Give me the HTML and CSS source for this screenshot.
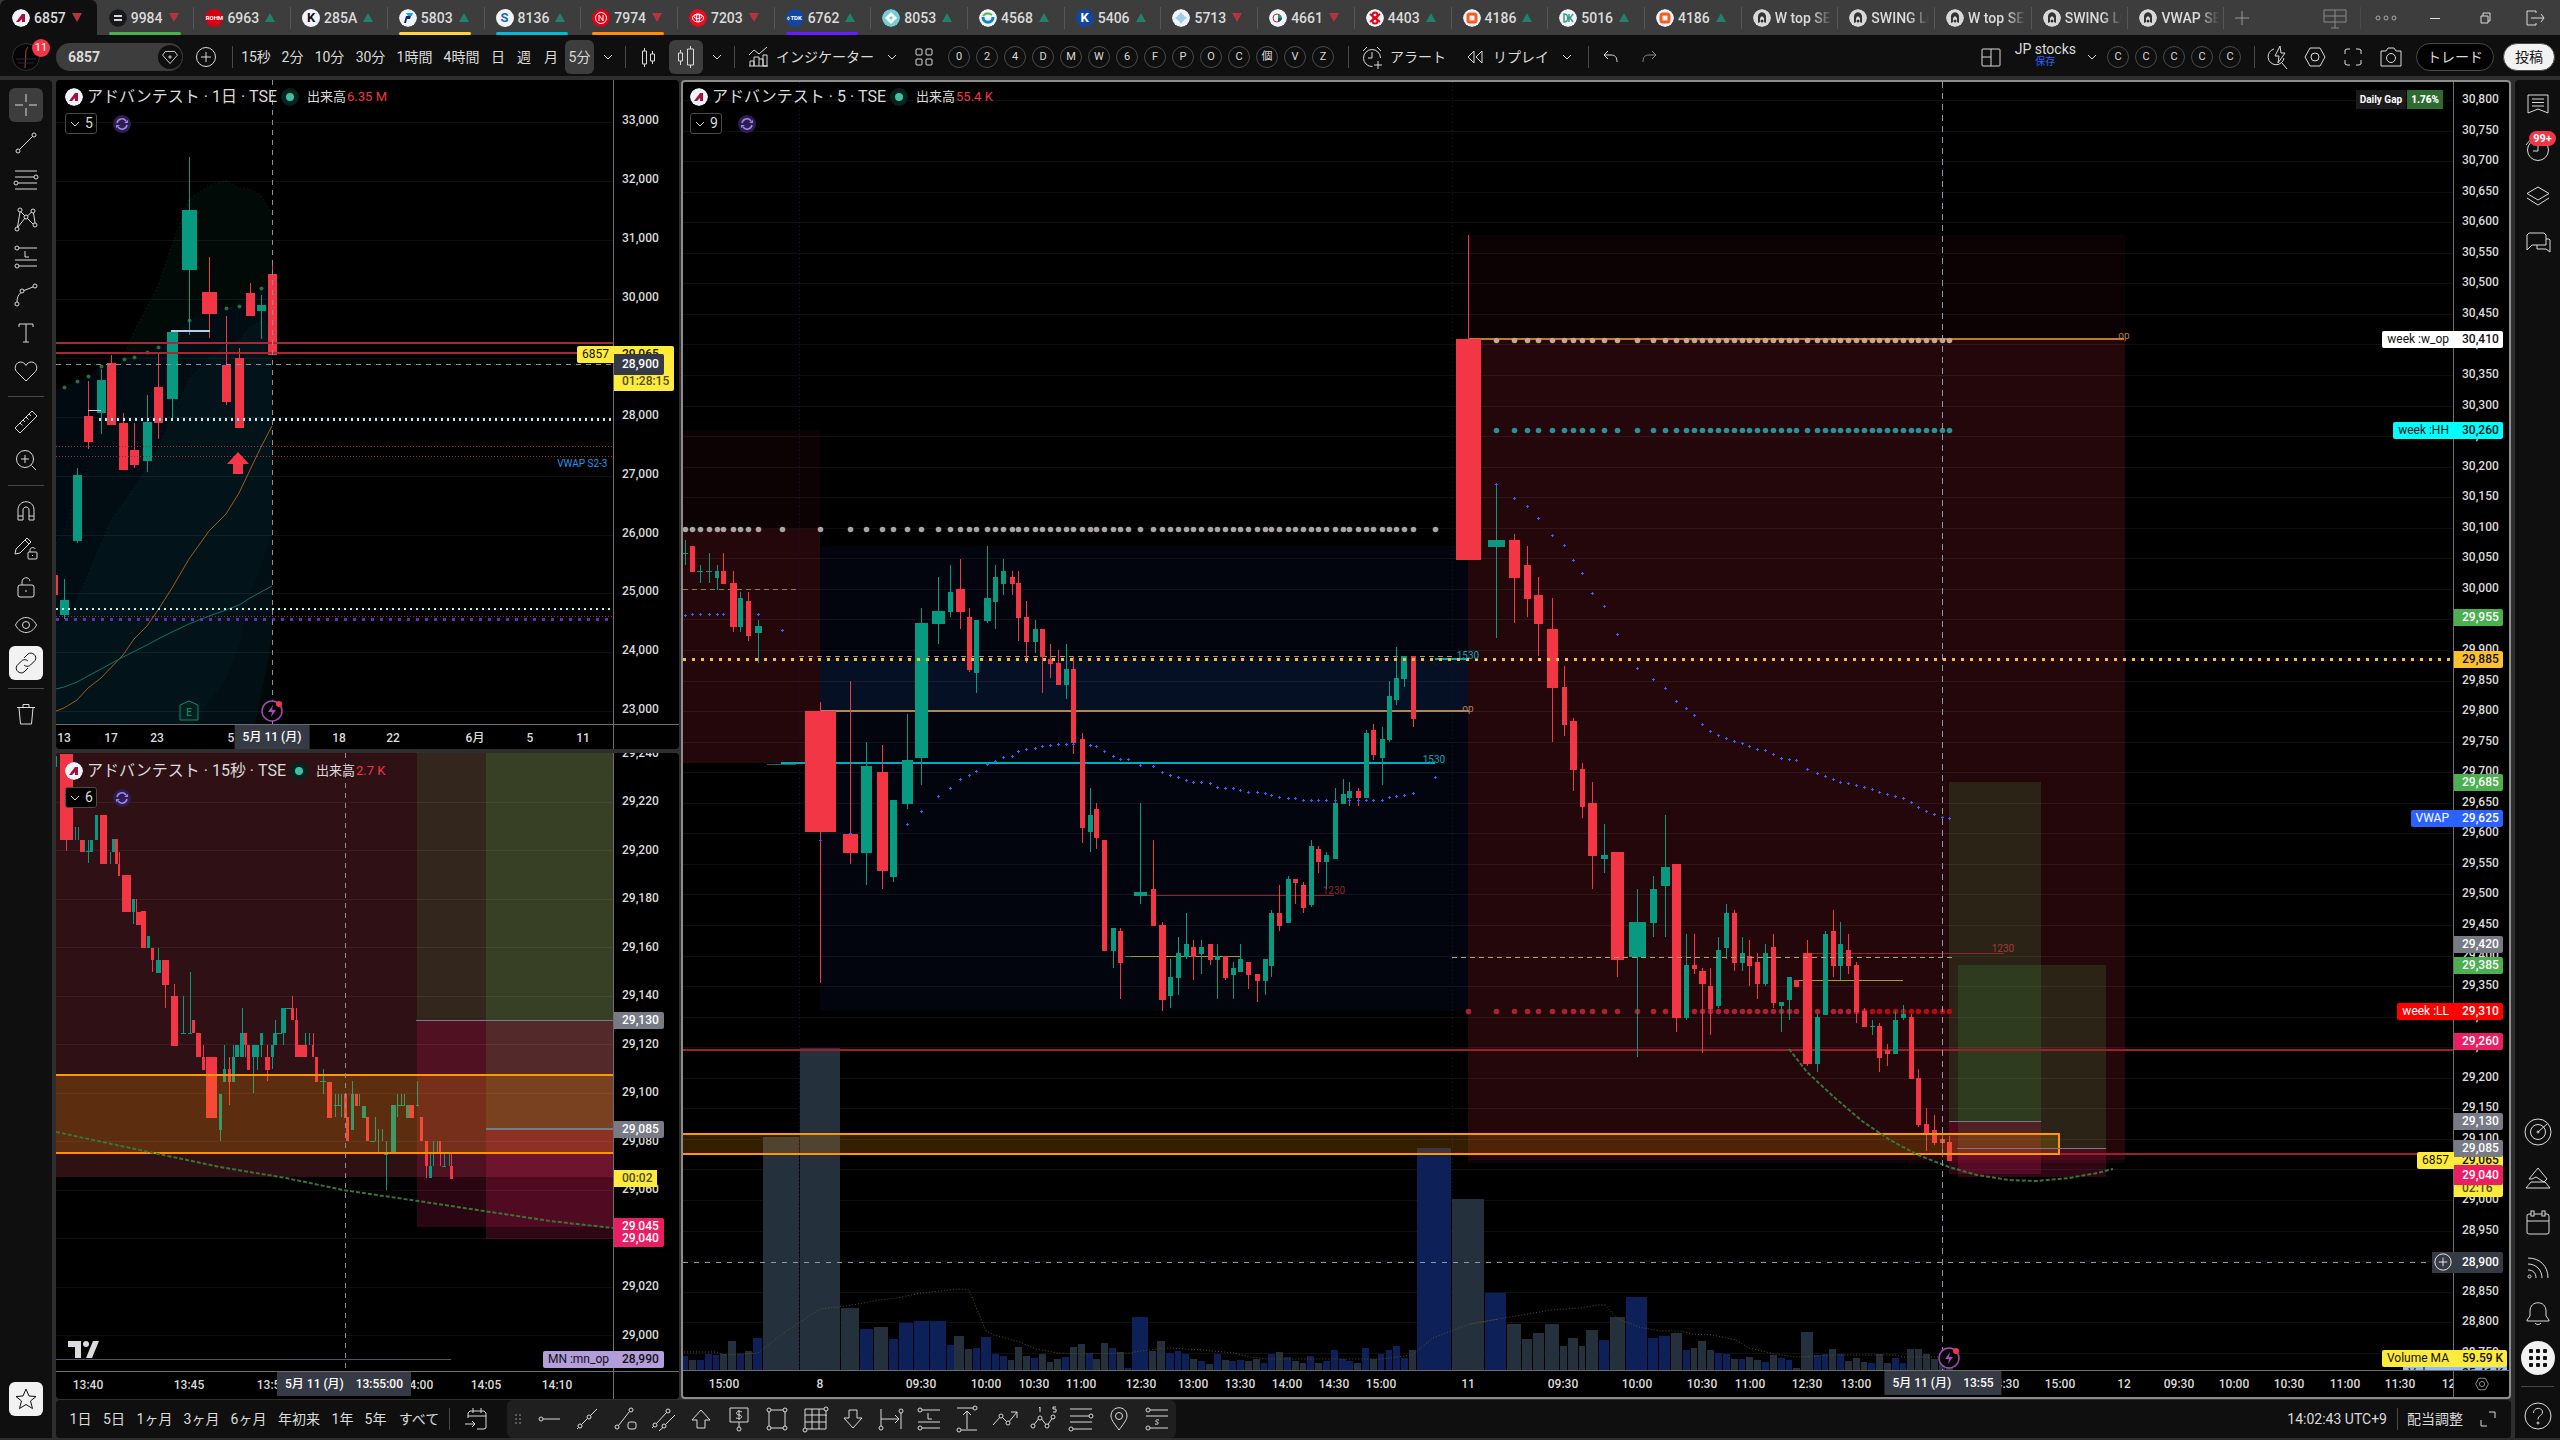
FILE: index.html
```html
<!DOCTYPE html>
<html lang="ja">
<head>
<meta charset="utf-8">
<title>6857 アドバンテスト</title>
<link rel="stylesheet" href="styles.css">
</head>
<body>
<svg class="sprite" aria-hidden="true">
  <symbol id="i-cross" viewBox="0 0 28 28"><path d="M14 3v8M14 17v8M3 14h8M17 14h8"/></symbol>
  <symbol id="i-trend" viewBox="0 0 28 28"><circle cx="6" cy="22" r="2"/><circle cx="22" cy="6" r="2"/><path d="M7.500 20.500l13-13"/></symbol>
  <symbol id="i-fib" viewBox="0 0 28 28"><path d="M3 4h22M3 10h19M6 16h19M3 22h22"/><circle cx="24" cy="10" r="2"/><circle cx="4" cy="16" r="2"/></symbol>
  <symbol id="i-pattern" viewBox="0 0 28 28"><circle cx="5" cy="24" r="2"/><circle cx="8" cy="5" r="2"/><circle cx="14" cy="12" r="2"/><circle cx="21" cy="6" r="2"/><circle cx="23" cy="20" r="2"/><path d="M5.500 22L8 7M9 7l4 4M15.500 11l4-4M21.500 8l1.500 10M21 19l-6-6M13 13l-7 9"/></symbol>
  <symbol id="i-long" viewBox="0 0 28 28"><circle cx="5" cy="5" r="2"/><circle cx="5" cy="23" r="2"/><path d="M7 5h18M7 23h18M3 17h22M13 8v6h4"/></symbol>
  <symbol id="i-path" viewBox="0 0 28 28"><circle cx="5" cy="23" r="2"/><circle cx="10" cy="10" r="2"/><circle cx="23" cy="5" r="2"/><path d="M5 21c0-4 1-7 4-9.500M12 9.500l9-3.500"/></symbol>
  <symbol id="i-text" viewBox="0 0 28 28"><path d="M7 8V5h14v3M14 5v18M11 23h6"/></symbol>
  <symbol id="i-heart" viewBox="0 0 28 28"><path d="M14 24L4.500 14.500C1.500 11 4 5 8.500 5 11 5 13 6.500 14 8.500 15 6.500 17 5 19.500 5c4.500 0 7 6 4 9.500z"/></symbol>
  <symbol id="i-ruler" viewBox="0 0 28 28"><path d="M3 20L20 3l5 5L8 25zM8 15l2.500 2.500M11 12l2 2M14 9l2.500 2.500M17 6l2 2"/></symbol>
  <symbol id="i-zoomin" viewBox="0 0 28 28"><circle cx="13" cy="13" r="8.500"/><path d="M19.500 19.500L24 24M13 9v8M9 13h8"/></symbol>
  <symbol id="i-magnet" viewBox="0 0 28 28"><path d="M6 23V13c0-11 16-11 16 0v10h-5V13c0-4-6-4-6 0v10zM6 19h5M17 19h5"/></symbol>
  <symbol id="i-drawlock" viewBox="0 0 28 28"><path d="M3 19l1-5L15 3l4 4L8 18zM13 5l4 4"/><rect x="16" y="17" width="9" height="7" rx="1"/><path d="M18 17v-2c0-3 5-3 5-1M20.500 20v1"/></symbol>
  <symbol id="i-lock" viewBox="0 0 28 28"><rect x="6" y="12" width="16" height="12" rx="2"/><path d="M10 12V9c0-5 7-6 8-1M14 17v2"/></symbol>
  <symbol id="i-eye" viewBox="0 0 28 28"><path d="M3.500 14c5-10 16-10 21 0-5 10-16 10-21 0z"/><circle cx="14" cy="14" r="3.500"/></symbol>
  <symbol id="i-link" viewBox="0 0 28 28"><path d="M12 9l4-4c4-3 10 2 7 6.500l-4.500 4.500c-2 2-5 1.500-6.500 0M16 19l-4 4c-4 3-10-2-7-6.500L9.500 12c2-2 5-1.500 6.500 0"/></symbol>
  <symbol id="i-trash" viewBox="0 0 28 28"><path d="M5 7.500h18M11 7V4.500h6V7M7 8l1.500 16h11L21 8"/></symbol>
  <symbol id="i-star" viewBox="0 0 28 28"><path d="M14 4l3 7 7 .5-5.500 4.500 2 7.500L14 19.500 7.500 23.500l2-7.500L4 11.500l7-.5z"/></symbol>
  <symbol id="i-down" viewBox="0 0 28 28"><path d="M10 12l4 4 4-4"/></symbol>
  <symbol id="i-down-s" viewBox="0 0 16 16"><path d="M4 6l4 4 4-4"/></symbol>
  <symbol id="i-sync" viewBox="0 0 18 18"><circle cx="9" cy="9" r="9" fill="#2c1f4d" stroke="none"/><path d="M4 8a5 5 0 0 1 9-2M14 10a5 5 0 0 1-9 2" stroke="#a583f0" stroke-width="1.500"/><path d="M15 5v3h-4zM3 13v-3h4z" fill="#a583f0" stroke="none"/></symbol>
  <symbol id="i-pluscircle" viewBox="0 0 28 28"><circle cx="14" cy="14" r="9.500"/><path d="M14 9v10M9 14h10"/></symbol>
  <symbol id="i-bars" viewBox="0 0 28 28"><path d="M8.500 8h4v13h-4zM10.500 5v3M10.500 21v3M16.500 11h4v7h-4zM18.500 8v3M18.500 18v3"/></symbol>
  <symbol id="i-candle" viewBox="0 0 28 28"><path d="M6.500 10h4v8h-4zM8.500 7v3M8.500 18v4M15.500 6h6v16h-6zM18.500 3v3M18.500 22v3"/></symbol>
  <symbol id="i-indicator" viewBox="0 0 28 28"><path d="M5 12l5-5 5 4 8-7M6 23v-5h4v5M10 23v-9h5v9M15 16h4v7M19 23V12h4v11zM5 23h19"/></symbol>
  <symbol id="i-grid4" viewBox="0 0 28 28"><rect x="6" y="6" width="6" height="6" rx="1"/><rect x="16" y="6" width="6" height="6" rx="1"/><rect x="6" y="16" width="6" height="6" rx="1"/><rect x="16" y="16" width="6" height="6" rx="1"/></symbol>
  <symbol id="i-alert" viewBox="0 0 28 28"><path d="M22.500 15a8.500 8.500 0 1 0-8 8.500M14 9v6h-4M5 8l4-4M19 4l4 4M20 18v8M16 22h8"/></symbol>
  <symbol id="i-rewind" viewBox="0 0 28 28"><path d="M13 8v12l-6-6zM21 8v12l-6-6z"/></symbol>
  <symbol id="i-undo" viewBox="0 0 28 28"><path d="M11 8l-4 4 4 4M7 12h7c4 0 6 2 6 7"/></symbol>
  <symbol id="i-redo" viewBox="0 0 28 28"><path d="M17 8l4 4-4 4M21 12h-7c-4 0-6 2-6 7"/></symbol>
  <symbol id="i-layout" viewBox="0 0 28 28"><rect x="5" y="6" width="18" height="17" rx="1"/><path d="M14 6v17M5 14h9"/></symbol>
  <symbol id="i-quick" viewBox="0 0 28 28"><path d="M11 6a8 8 0 1 0 10 9M19 20l5 6M17 3l-5 10h4l-1 7 7-10h-4z"/></symbol>
  <symbol id="i-hex" viewBox="0 0 28 28"><path d="M9 5h10l5 9-5 9H9l-5-9z"/><circle cx="14" cy="14" r="4"/></symbol>
  <symbol id="i-full" viewBox="0 0 28 28"><path d="M6 11V7l2-1h3M17 6h3l2 1v4M22 17v4l-2 1h-3M11 22H8l-2-1v-4"/></symbol>
  <symbol id="i-camera" viewBox="0 0 28 28"><path d="M4 8h5l2-3h6l2 3h5v15H4z"/><circle cx="14" cy="15" r="4.500"/></symbol>
  <symbol id="i-list" viewBox="0 0 28 28"><path d="M4 5h20v18l-10-4-10 4zM8 9h12M8 12.500h12M8 16h12"/></symbol>
  <symbol id="i-clock" viewBox="0 0 28 28"><circle cx="14" cy="14" r="10.500"/><path d="M14 7v8H9M2 9l5-6M26 9l-5-6"/></symbol>
  <symbol id="i-layers" viewBox="0 0 28 28"><path d="M14 5l11 6.500L14 18 3 11.500zM3 16l11 7 11-7"/></symbol>
  <symbol id="i-chat" viewBox="0 0 28 28"><path d="M3 22V7l2-2h15l2 2v10H8zM22 11h3l1 1v12l-4-3h-9v-4"/></symbol>
  <symbol id="i-radar" viewBox="0 0 28 28"><circle cx="14" cy="14" r="13"/><circle cx="14" cy="14" r="7.500"/><path d="M14 14l9-8"/><circle cx="14" cy="14" r="1"/></symbol>
  <symbol id="i-peak" viewBox="0 0 28 28"><path d="M2 24h24l-5-6H7zM5 15l9-11 9 11-3 3-8-5-4 2z"/></symbol>
  <symbol id="i-cal" viewBox="0 0 28 28"><rect x="3" y="5" width="22" height="20" rx="2"/><path d="M3 12h22"/><rect class="mask" x="7" y="2" width="3" height="5"/><rect class="mask" x="18" y="2" width="3" height="5"/></symbol>
  <symbol id="i-rss" viewBox="0 0 28 28"><circle cx="5.500" cy="22.500" r="1.500"/><path d="M4 16c5 0 8 3 8 8M4 10c8 0 14 6 14 14M4 4c12 0 20 8 20 20"/></symbol>
  <symbol id="i-bell" viewBox="0 0 28 28"><path d="M3 22v-1l3-4v-5c0-11 16-11 16 0v5l3 4v1zM11 24c1 2 5 2 6 0"/></symbol>
  <symbol id="i-help" viewBox="0 0 28 28"><circle cx="14" cy="14" r="13"/><path d="M9.500 11c0-6 9-6 9-1 0 4-4.500 3-4.500 7.500"/><circle cx="14" cy="21" r="1"/></symbol>
  <symbol id="i-goto" viewBox="0 0 28 28"><path d="M6 13V8l2-2h14l2 2v15l-2 1h-7M6 11h18M11 3v5M19 3v5M3 19h10M10 16l3 3-3 3"/></symbol>
  <symbol id="i-hray" viewBox="0 0 28 28"><circle cx="6" cy="14" r="2"/><path d="M8 14h17"/></symbol>
  <symbol id="i-line" viewBox="0 0 28 28"><circle cx="7" cy="21" r="2"/><circle cx="16" cy="12" r="2"/><path d="M4 24l1.500-1.500M8.500 19.500l6-6M17.500 10.500L24 4"/></symbol>
  <symbol id="i-rotate" viewBox="0 0 28 28"><circle cx="6" cy="22" r="2"/><circle cx="20" cy="5" r="2"/><path d="M7.500 20.500l11-14"/><rect x="17" y="17" width="8" height="7" rx="2"/></symbol>
  <symbol id="i-channel" viewBox="0 0 28 28"><circle cx="6" cy="20" r="2"/><circle cx="19" cy="6" r="2"/><circle cx="15" cy="21" r="2"/><path d="M7.500 18.500l10-11M3 23l1.500-1.500M10 26l4-3.500M16.500 19.500L26 10"/></symbol>
  <symbol id="i-up" viewBox="0 0 28 28"><path d="M14 5l9 10h-5v8h-8v-8H5z"/></symbol>
  <symbol id="i-note" viewBox="0 0 28 28"><path d="M5 3h18v14H5zM14 17v5"/><circle cx="14" cy="24" r="2"/><path d="M17 7c-6-3-7 3-3 3s4 5-3 3M14 5v10"/></symbol>
  <symbol id="i-rect" viewBox="0 0 28 28"><path d="M6 7v14M22 7v14M8 5h12M8 23h12"/><circle cx="6" cy="5" r="2"/><circle cx="22" cy="5" r="2"/><circle cx="6" cy="23" r="2"/><circle cx="22" cy="23" r="2"/></symbol>
  <symbol id="i-table" viewBox="0 0 28 28"><path d="M4 4h19M4 4v19M4 10h21v14H6M4 17h21M11 4v20M18 4v20M25 6v5"/><circle cx="25" cy="4" r="2"/><circle cx="4" cy="25" r="2"/></symbol>
  <symbol id="i-dn" viewBox="0 0 28 28"><path d="M14 23l9-10h-5V5h-8v8H5z"/></symbol>
  <symbol id="i-hrange" viewBox="0 0 28 28"><path d="M4 4v17M24 8v16M4 14h18M18 10l4 4-4 4"/><circle cx="4" cy="23" r="2"/><circle cx="24" cy="6" r="2"/></symbol>
  <symbol id="i-vrange" viewBox="0 0 28 28"><path d="M4 3h16M8 25h16M14 6v18M10 10l4-4 4 4"/><circle cx="22" cy="3" r="2"/><circle cx="6" cy="25" r="2"/></symbol>
  <symbol id="i-zig" viewBox="0 0 28 28"><path d="M2 20l8-9 7 7 9-11M20 7h6v6"/><circle class="mask" cx="10" cy="11" r="2"/><circle class="mask" cx="17" cy="18" r="2"/></symbol>
  <symbol id="i-wave" viewBox="0 0 28 28"><path d="M4 21l7-9 7 9 6-9"/><circle class="mask" cx="4" cy="21" r="2"/><circle class="mask" cx="11" cy="13" r="2"/><circle class="mask" cx="18" cy="21" r="2"/><circle class="mask" cx="24" cy="12" r="2"/><path d="M10 3l1-1v5M27 2h-3v2h3v3h-3"/></symbol>
  <symbol id="i-fib2" viewBox="0 0 28 28"><path d="M3 4h22M3 11h20M3 17h22M6 24h19"/><circle class="mask" cx="24" cy="11" r="2"/><circle class="mask" cx="4" cy="24" r="2"/></symbol>
  <symbol id="i-pin" viewBox="0 0 28 28"><path d="M14 25C8 17 6 14 6 11c0-11 16-11 16 0 0 3-2 6-8 14z"/><circle cx="14" cy="11" r="3.500"/></symbol>
  <symbol id="i-short" viewBox="0 0 28 28"><circle cx="5" cy="5" r="2"/><circle cx="5" cy="23" r="2"/><path d="M7 5h18M7 23h18M3 11h22M16 15c-4-1-4 2-2 2s2 3-2 2"/></symbol>
  <symbol id="l-adv" viewBox="0 0 18 18"><circle cx="9" cy="9" r="9" fill="#f1f3fa" stroke="none"/><path d="M4 13L10 5h3v8h-3v-3l-3 3z" fill="#a3123f" stroke="none"/></symbol>
  <symbol id="l-lion" viewBox="0 0 18 18"><circle cx="9" cy="9" r="9" fill="#d8d8d8" stroke="none"/><path d="M5 14V7c1-5 7-5 8 0v7l-2-1V9L9 7 7 9v4z" fill="#333" stroke="none"/><circle cx="9" cy="12" r="1.500" fill="#333" stroke="none"/></symbol>
</svg>

<nav class="tabs" aria-label="チャートタブ">
  <div class="tab-list">
    <a class="tab active" href="#"><svg class="logo"><use href="#l-adv"/></svg><span>6857</span><i class="fall"></i></a>
    <a class="tab u-green" href="#"><svg class="logo" viewBox="0 0 18 18"><circle cx="9" cy="9" r="9" fill="#15191c"/><path d="M5 6h8v2H5zM5 10h8v2H5z" fill="#d8d8d8"/></svg><span>9984</span><i class="fall"></i></a>
    <a class="tab" href="#"><b class="logo red tiny">ROHM</b><span>6963</span><i class="rise"></i></a>
    <a class="tab" href="#"><b class="logo white">K</b><span>285A</span><i class="rise"></i></a>
    <a class="tab u-yellow" href="#"><svg class="logo" viewBox="0 0 18 18"><circle cx="9" cy="9" r="9" fill="#f1f3fa"/><path d="M7 4h7l-1 3H9z" fill="#1aa3e8"/><path d="M7 7h5l-1 3H8l-1 4H5z" fill="#13286c"/></svg><span>5803</span><i class="rise"></i></a>
    <a class="tab u-cyan" href="#"><b class="logo white blue">S</b><span>8136</span><i class="rise"></i></a>
    <a class="tab u-orange" href="#"><svg class="logo" viewBox="0 0 18 18"><circle cx="9" cy="9" r="9" fill="#e60012"/><circle cx="9" cy="9" r="5.500" fill="none" stroke="#fff"/><path d="M7 12V6l4 6V6" fill="none" stroke="#fff"/></svg><span>7974</span><i class="fall"></i></a>
    <a class="tab" href="#"><svg class="logo" viewBox="0 0 18 18"><circle cx="9" cy="9" r="9" fill="#eb0a1e"/><g fill="none" stroke="#fff"><ellipse cx="9" cy="9" rx="5.500" ry="4"/><ellipse cx="9" cy="7.500" rx="4" ry="2"/><ellipse cx="9" cy="9" rx="1.500" ry="4"/></g></svg><span>7203</span><i class="fall"></i></a>
    <a class="tab u-purple" href="#"><b class="logo navy tiny">⬨TDK</b><span>6762</span><i class="rise"></i></a>
    <a class="tab" href="#"><svg class="logo" viewBox="0 0 18 18"><circle cx="9" cy="9" r="9" fill="#74cfd4"/><path d="M9 3l6 6-6 6-6-6z" fill="#fff"/><path d="M9 7l2 2-2 2-2-2z" fill="#74cfd4"/></svg><span>8053</span><i class="rise"></i></a>
    <a class="tab" href="#"><svg class="logo" viewBox="0 0 18 18"><circle cx="9" cy="9" r="9" fill="#f1f3fa"/><path d="M4 8c0 7 10 7 10 0" fill="none" stroke="#0a86c8" stroke-width="3"/><path d="M4 7c3-4 6-3 9-1" fill="none" stroke="#58b947" stroke-width="2"/></svg><span>4568</span><i class="rise"></i></a>
    <a class="tab" href="#"><b class="logo navy">K</b><span>5406</span><i class="rise"></i></a>
    <a class="tab" href="#"><svg class="logo" viewBox="0 0 18 18"><circle cx="9" cy="9" r="9" fill="#f1f3fa"/><path d="M9 3l2 3h1v1l3 2-3 2v1h-1l-2 3-2-3H6v-1L3 9l3-2V6h1z" fill="#9fcdea"/></svg><span>5713</span><i class="fall"></i></a>
    <a class="tab" href="#"><svg class="logo" viewBox="0 0 18 18"><circle cx="9" cy="9" r="9" fill="#f1f3fa"/><circle cx="8" cy="9" r="4" fill="none" stroke="#c2263c"/><path d="M9 6a3 3 0 0 1 4 3H9z" fill="#2c9c4a"/><path d="M9 9h4a3 3 0 0 1-4 3z" fill="#1c4b9c"/></svg><span>4661</span><i class="fall"></i></a>
    <a class="tab" href="#"><svg class="logo" viewBox="0 0 18 18"><circle cx="9" cy="9" r="9" fill="#f1f3fa"/><g fill="none" stroke="#e60012" stroke-width="2"><circle cx="9" cy="6" r="2.500"/><circle cx="9" cy="12" r="2.500"/><path d="M4 5l10 8M14 5L4 13"/></g></svg><span>4403</span><i class="rise"></i></a>
    <a class="tab" href="#"><svg class="logo" viewBox="0 0 18 18"><circle cx="9" cy="9" r="9" fill="#f1f3fa"/><rect x="5" y="5" width="8" height="8" rx="2" fill="none" stroke="#ff5a14" stroke-width="3"/></svg><span>4186</span><i class="rise"></i></a>
    <a class="tab" href="#"><svg class="logo" viewBox="0 0 18 18"><circle cx="9" cy="9" r="9" fill="#f1f3fa"/><path d="M5 5v8c5 0 5-8 0-8zM10 5v8M14 5l-3 4 3 4" fill="none" stroke="#3c9c88" stroke-width="1.500"/></svg><span>5016</span><i class="rise"></i></a>
    <a class="tab" href="#"><svg class="logo" viewBox="0 0 18 18"><circle cx="9" cy="9" r="9" fill="#f1f3fa"/><rect x="5" y="5" width="8" height="8" rx="2" fill="none" stroke="#ff5a14" stroke-width="3"/></svg><span>4186</span><i class="rise"></i></a>
    <a class="tab fade" href="#"><svg class="logo"><use href="#l-lion"/></svg><span>W top SE</span></a>
    <a class="tab fade" href="#"><svg class="logo"><use href="#l-lion"/></svg><span>SWING LO</span></a>
    <a class="tab fade" href="#"><svg class="logo"><use href="#l-lion"/></svg><span>W top SE</span></a>
    <a class="tab fade" href="#"><svg class="logo"><use href="#l-lion"/></svg><span>SWING LO</span></a>
    <a class="tab fade" href="#"><svg class="logo"><use href="#l-lion"/></svg><span>VWAP SE</span></a>
  </div>
  <div class="window-tools">
    <button class="wt first" aria-label="新しいタブ"><svg viewBox="0 0 28 28"><path d="M14 7v14M7 14h14"/></svg></button>
    <button class="wt dim push" aria-label="ウィンドウ"><svg viewBox="0 0 28 28"><path d="M3 6h22v12H3zM14 6v18M3 12h22M10 24h8"/></svg></button>
    <button class="wt dim edge" aria-label="その他"><svg viewBox="0 0 28 28"><circle cx="6" cy="14" r="2"/><circle cx="14" cy="14" r="2"/><circle cx="22" cy="14" r="2"/></svg></button>
    <button class="wt" aria-label="最小化"><svg viewBox="0 0 28 28"><path d="M9 14.500h10"/></svg></button>
    <button class="wt" aria-label="元に戻す"><svg viewBox="0 0 28 28"><path d="M10 12h7v7h-7zM12 12V9h7v8h-2"/></svg></button>
    <button class="wt" aria-label="終了"><svg viewBox="0 0 28 28"><path d="M15 9V7H6v14h9v-2M10 14h13M20 10l3 4-3 4"/></svg></button>
  </div>
</nav>

<header class="toolbar">
  <button class="avatar" aria-label="メニュー"><svg viewBox="0 0 28 28"><circle cx="14" cy="14" r="13.500" fill="#050505" stroke="#333"/><path d="M13 25l1-18 2-3" stroke="#a04a20"/><path d="M4 16h20M6 20h16" stroke="#222838"/></svg><span class="badge">11</span></button>
  <button class="symbol"><span>6857</span><svg viewBox="0 0 28 28"><circle cx="14" cy="14" r="13" fill="#0f0f0f" stroke="none"/><path d="M9 8h10l3 4-8 9-8-9zM14 12v4M12 14h4"/></svg></button>
  <button class="tb plus" aria-label="追加"><svg><use href="#i-pluscircle"/></svg></button>
  <i class="sep"></i>
  <div class="intervals">
    <button>15秒</button><button>2分</button><button>10分</button><button>30分</button><button>1時間</button><button>4時間</button><button>日</button><button>週</button><button>月</button><button class="on">5分</button>
  </div>
  <button class="chev" aria-label="時間足"><svg><use href="#i-down"/></svg></button>
  <i class="sep"></i>
  <button class="tb" aria-label="ローソク足"><svg><use href="#i-bars"/></svg></button>
  <button class="tb on" aria-label="出来高ローソク足"><svg><use href="#i-candle"/></svg></button>
  <button class="chev" aria-label="チャート種類"><svg><use href="#i-down"/></svg></button>
  <i class="sep"></i>
  <button class="label-btn"><svg><use href="#i-indicator"/></svg>インジケーター</button>
  <button class="chev wide" aria-label="お気に入り"><svg><use href="#i-down"/></svg></button>
  <button class="chev" aria-label="テンプレート"><svg><use href="#i-grid4"/></svg></button>
  <div class="rounds">
    <button>0</button><button>2</button><button>4</button><button>D</button><button>M</button><button>W</button><button>6</button><button>F</button><button>P</button><button>O</button><button>C</button><button>個</button><button>V</button><button>Z</button>
  </div>
  <i class="sep"></i>
  <button class="label-btn"><svg><use href="#i-alert"/></svg>アラート</button>
  <button class="label-btn replay"><svg><use href="#i-rewind"/></svg>リプレイ</button>
  <button class="chev wide" aria-label="リプレイ設定"><svg><use href="#i-down"/></svg></button>
  <i class="sep"></i>
  <button class="tb" aria-label="元に戻す"><svg><use href="#i-undo"/></svg></button>
  <button class="tb dim" aria-label="やり直す"><svg><use href="#i-redo"/></svg></button>
  <div class="right-group">
    <button class="chev" aria-label="レイアウト"><svg><use href="#i-layout"/></svg></button>
    <button class="layout-name">JP stocks<small>保存</small></button>
    <button class="chev" aria-label="レイアウト一覧"><svg><use href="#i-down"/></svg></button>
    <div class="rounds flush"><button>C</button><button>C</button><button>C</button><button>C</button><button>C</button></div>
    <i class="sep"></i>
    <button class="tb" aria-label="クイック検索"><svg><use href="#i-quick"/></svg></button>
    <button class="tb" aria-label="設定"><svg><use href="#i-hex"/></svg></button>
    <button class="tb" aria-label="全画面"><svg><use href="#i-full"/></svg></button>
    <button class="tb" aria-label="スナップショット"><svg><use href="#i-camera"/></svg></button>
    <button class="pill trade">トレード</button>
    <button class="pill post">投稿</button>
  </div>
</header>

<main class="workspace">
  <aside class="draw-tools">
    <button class="on" aria-label="十字"><svg><use href="#i-cross"/></svg></button>
    <button aria-label="トレンドライン"><svg><use href="#i-trend"/></svg></button>
    <button aria-label="フィボナッチ"><svg><use href="#i-fib"/></svg></button>
    <button aria-label="パターン"><svg><use href="#i-pattern"/></svg></button>
    <button aria-label="予測"><svg><use href="#i-long"/></svg></button>
    <button aria-label="ブラシ"><svg><use href="#i-path"/></svg></button>
    <button aria-label="テキスト"><svg><use href="#i-text"/></svg></button>
    <button aria-label="アイコン"><svg><use href="#i-heart"/></svg></button>
    <i></i>
    <button aria-label="計測"><svg><use href="#i-ruler"/></svg></button>
    <button aria-label="ズーム"><svg><use href="#i-zoomin"/></svg></button>
    <i></i>
    <button aria-label="マグネット"><svg><use href="#i-magnet"/></svg></button>
    <button aria-label="描画モード維持"><svg><use href="#i-drawlock"/></svg></button>
    <button aria-label="ロック"><svg><use href="#i-lock"/></svg></button>
    <button aria-label="表示"><svg><use href="#i-eye"/></svg></button>
    <button class="inv" aria-label="同期"><svg><use href="#i-link"/></svg></button>
    <i></i>
    <button aria-label="削除"><svg><use href="#i-trash"/></svg></button>
    <button class="inv last" aria-label="お気に入り"><svg><use href="#i-star"/></svg></button>
  </aside>

  <div class="stage">
    <div class="charts">
      <div class="left-charts">
        <section class="pane daily" id="daily">
          <div class="plot"><svg class="canvas"></svg>
            <div class="legend"><svg class="logo"><use href="#l-adv"/></svg><h2>アドバンテスト · 1日 · TSE</h2><i class="status"></i><span>出来高</span><em>6.35 M</em></div>
            <div class="legend-row"><button><svg><use href="#i-down-s"/></svg>5</button><svg class="sync"><use href="#i-sync"/></svg></div>
          </div>
          <div class="price-axis"></div><div class="time-axis"></div><div class="corner"></div>
        </section>
        <section class="pane seconds" id="seconds">
          <div class="plot"><svg class="canvas"></svg>
            <div class="legend"><svg class="logo"><use href="#l-adv"/></svg><h2>アドバンテスト · 15秒 · TSE</h2><i class="status"></i><span>出来高</span><em>2.7 K</em></div>
            <div class="legend-row"><button><svg><use href="#i-down-s"/></svg>6</button><svg class="sync"><use href="#i-sync"/></svg></div>
          </div>
          <div class="price-axis"></div><div class="time-axis"></div><div class="corner"></div>
        </section>
      </div>
      <section class="pane five" id="five">
        <div class="plot"><svg class="canvas"></svg>
          <div class="legend"><svg class="logo"><use href="#l-adv"/></svg><h2>アドバンテスト · 5 · TSE</h2><i class="status"></i><span>出来高</span><em>55.4 K</em></div>
          <div class="legend-row"><button><svg><use href="#i-down-s"/></svg>9</button><svg class="sync"><use href="#i-sync"/></svg></div>
          <div class="gap-table"><span>Daily Gap</span><b>1.76%</b></div>
        </div>
        <div class="price-axis"></div><div class="time-axis"></div><div class="corner"><svg><use href="#i-hex"/></svg></div>
      </section>
    </div>
    <footer class="bottom">
      <div class="ranges"><button>1日</button><button>5日</button><button>1ヶ月</button><button>3ヶ月</button><button>6ヶ月</button><button>年初来</button><button>1年</button><button>5年</button><button>すべて</button></div>
      <i class="sep"></i>
      <button class="tb" aria-label="日付へ移動"><svg><use href="#i-goto"/></svg></button>
      <div class="favorites">
        <span class="grip"></span>
        <button aria-label="水平レイ"><svg><use href="#i-hray"/></svg></button>
        <button aria-label="直線"><svg><use href="#i-line"/></svg></button>
        <button aria-label="回転"><svg><use href="#i-rotate"/></svg></button>
        <button aria-label="チャネル"><svg><use href="#i-channel"/></svg></button>
        <button aria-label="上矢印"><svg><use href="#i-up"/></svg></button>
        <button aria-label="価格ノート"><svg><use href="#i-note"/></svg></button>
        <button aria-label="長方形"><svg><use href="#i-rect"/></svg></button>
        <button aria-label="表"><svg><use href="#i-table"/></svg></button>
        <button aria-label="下矢印"><svg><use href="#i-dn"/></svg></button>
        <button aria-label="期間"><svg><use href="#i-hrange"/></svg></button>
        <button aria-label="ロング"><svg><use href="#i-long"/></svg></button>
        <button aria-label="値幅"><svg><use href="#i-vrange"/></svg></button>
        <button aria-label="パス"><svg><use href="#i-zig"/></svg></button>
        <button aria-label="エリオット波動"><svg><use href="#i-wave"/></svg></button>
        <button aria-label="フィボナッチ"><svg><use href="#i-fib2"/></svg></button>
        <button aria-label="ピン"><svg><use href="#i-pin"/></svg></button>
        <button aria-label="ショート"><svg><use href="#i-short"/></svg></button>
      </div>
      <button class="clock">14:02:43 UTC+9</button>
      <i class="sep"></i>
      <button class="adjust">配当調整</button>
      <button class="tb" aria-label="最大化"><svg viewBox="0 0 28 28"><path d="M15 7h6v6M7 15v6h6"/></svg></button>
    </footer>
  </div>

  <aside class="widgets">
    <button aria-label="ウォッチリスト"><svg><use href="#i-list"/></svg></button>
    <button aria-label="アラート"><svg><use href="#i-clock"/></svg><span class="badge">99+</span></button>
    <button aria-label="オブジェクト"><svg><use href="#i-layers"/></svg></button>
    <button aria-label="チャット"><svg><use href="#i-chat"/></svg></button>
    <button class="push" aria-label="スクリーナー"><svg><use href="#i-radar"/></svg></button>
    <button aria-label="Pine"><svg><use href="#i-peak"/></svg></button>
    <button aria-label="カレンダー"><svg><use href="#i-cal"/></svg></button>
    <button aria-label="ニュース"><svg><use href="#i-rss"/></svg></button>
    <button aria-label="通知"><svg><use href="#i-bell"/></svg></button>
    <button class="apps" aria-label="アプリ"><svg viewBox="0 0 34 34"><circle cx="17" cy="17" r="17" fill="#f2f2f2" stroke="none"/><g fill="#111" stroke="none"><rect x="8" y="8" width="4" height="4" rx="1"/><rect x="15" y="8" width="4" height="4" rx="1"/><rect x="22" y="8" width="4" height="4" rx="1"/><rect x="8" y="15" width="4" height="4" rx="1"/><rect x="15" y="15" width="4" height="4" rx="1"/><rect x="22" y="15" width="4" height="4" rx="1"/><rect x="8" y="22" width="4" height="4" rx="1"/><rect x="15" y="22" width="4" height="4" rx="1"/><rect x="22" y="22" width="4" height="4" rx="1"/></g></svg></button>
    <i></i>
    <button aria-label="ヘルプ"><svg><use href="#i-help"/></svg></button>
  </aside>
</main>
<script src="charts.js"></script>
</body>
</html>
```
FILE: styles.css
```css
* { box-sizing: border-box; }
html, body { height: 100%; }
body {
  margin: 0;
  display: flex;
  flex-direction: column;
  background: #2e2e2e;
  color: #dbdbdb;
  font: 14px/20px Roboto, "Noto Sans CJK JP", sans-serif;
  overflow: hidden;
}
button {
  font: inherit;
  color: inherit;
  background: none;
  border: 0;
  padding: 0;
  margin: 0;
  white-space: nowrap;
}
svg { display: block; fill: none; stroke: currentColor; stroke-width: 1; }
button svg { width: 28px; height: 28px; flex: none; }
.sprite { position: absolute; width: 0; height: 0; }
.mask { fill: #0f0f0f; }
.sep { width: 1px; height: 22px; margin: 0 3px; background: #4a4a4a; flex: none; }
.badge {
  position: absolute;
  background: #f23645;
  color: #fff;
  font-size: 12px;
  line-height: 16px;
  border-radius: 9px;
  text-align: center;
}

/* Tabs */
.tabs { display: flex; height: 35px; background: #3d3d3d; flex: none; }
.tab-list { display: flex; flex: 1; min-width: 0; }
.tab {
  position: relative;
  flex: 1 1 0;
  min-width: 0;
  display: flex;
  align-items: center;
  padding-left: 12px;
  gap: 4px;
  color: #dbdbdb;
  text-decoration: none;
  font-weight: 500;
  overflow: hidden;
  white-space: nowrap;
}
.tab + .tab + .tab::before, .tab:last-child::after {
  content: "";
  position: absolute;
  left: 0;
  top: 7px;
  width: 1px;
  height: 22px;
  background: #575757;
}
.tab:last-child::after { left: auto; right: 0; }
.tab.active { background: #0f0f0f; border-radius: 6px 6px 0 0; }
.logo { width: 18px; height: 18px; border-radius: 50%; flex: none; stroke: none; }
b.logo { display: flex; align-items: center; justify-content: center; font: 700 13px/18px Roboto, sans-serif; }
b.tiny { font-size: 6px; }
.red { background: #d7000f; color: #fff; }
.white { background: #f1f3fa; color: #111; }
.navy { background: #1246a0; color: #fff; }
.blue { color: #1d66b5; }
.rise, .fall { margin-left: 2px; border: 5px solid transparent; border-top: 0; border-bottom: 9px solid #22806c; }
.fall { border-bottom: 0; border-top: 9px solid #b5343e; }
.u-green { --line: #4caf50; } .u-yellow { --line: #fdd835; } .u-cyan { --line: #00bcd4; }
.u-orange { --line: #ff9100; } .u-purple { --line: #651fff; }
.tab[class*="u-"]::after {
  content: "";
  position: absolute;
  left: 12px;
  bottom: 0;
  width: 72px;
  height: 3px;
  border-radius: 2px;
  background: var(--line);
}
.fade span { flex: 1; margin-right: 5px; overflow: hidden; -webkit-mask-image: linear-gradient(90deg, #000 65%, transparent); mask-image: linear-gradient(90deg, #000 65%, transparent); }
.window-tools { display: flex; width: 336px; align-items: center; flex: none; }
.wt { width: 50px; height: 35px; display: flex; align-items: center; justify-content: center; }
.wt.first { width: 36px; color: #999; }
.wt.push { margin-left: auto; }
.dim { color: #8a8a8a; }
.wt.edge { border-left: 1px solid #4a4a4a; height: 22px; color: #aaa; }

/* Toolbar */
.toolbar { display: flex; align-items: center; height: 41px; background: #0f0f0f; padding: 2px 5px 0 12px; flex: none; }
.avatar { position: relative; margin-right: 16px; }
.avatar .badge { width: 18px; top: -4px; left: 20px; line-height: 18px; font-size: 11px; }
.symbol { display: flex; width: 127px; height: 28px; border-radius: 14px; background: #3d3d3d; align-items: center; padding: 0 0 0 12px; font-weight: 700; justify-content: space-between; }
.symbol svg { width: 26px; height: 26px; }
.tb, .chev { width: 38px; height: 34px; display: flex; align-items: center; justify-content: center; border-radius: 6px; flex: none; }
.tb.plus { width: 46px; }
.chev { width: 28px; }
.chev.wide { width: 36px; }
.tb.on { width: 34px; margin-left: 2px; background: #3d3d3d; }
.intervals { display: grid; grid-template-columns: 40px 33px 41px 41px 47px 47px 26px 26px 28px 29px; height: 34px; }
.intervals .on { background: #3d3d3d; border-radius: 6px; }
.label-btn { display: flex; align-items: center; gap: 4px; padding-left: 6px; }
.replay { padding-left: 15px; }
.rounds { display: flex; gap: 6px; padding: 0 11px 0 10px; }
.rounds.flush { padding: 0 10px 0 1px; }
.rounds button { width: 22px; height: 22px; border: 1px solid #4a4a4a; border-radius: 50%; font-size: 11px; line-height: 20px; }
.right-group { display: flex; align-items: center; margin-left: auto; }
.layout-name { line-height: 13px; padding: 0 2px 4px 10px; }
.layout-name small { display: block; font-size: 10px; line-height: 11px; color: #2962ff; }
.pill { height: 28px; border-radius: 14px; width: 78px; border: 1px solid #4a4a4a; background: #000; margin-left: 6px; }
.post { width: 52px; background: #f2f2f2; color: #0f0f0f; margin-left: 9px; }

/* Workspace */
.workspace { flex: 1; min-height: 0; display: grid; grid-template-columns: 52px minmax(0, 1fr) 45px; gap: 4px; padding: 4px 0 2px; }
.draw-tools, .widgets { background: #0f0f0f; display: flex; flex-direction: column; align-items: center; }
.draw-tools { padding: 8px 0 22px; border-radius: 0 4px 0 0; }
.draw-tools button { width: 34px; height: 34px; margin: 0 0 4px; display: flex; align-items: center; justify-content: center; border-radius: 6px; flex: none; }
.draw-tools .on { background: #3d3d3d; }
.draw-tools .inv { background: #f2f2f2; color: #0f0f0f; }
.draw-tools .last { margin: auto 0 0; }
.draw-tools i { width: 36px; height: 1px; background: #4a4a4a; margin: 4px 0 8px; flex: none; }
.widgets { padding: 1px 0 0; border-radius: 4px 0 0 0; }
.widgets button { position: relative; width: 45px; height: 46px; display: flex; align-items: center; justify-content: center; flex: none; }
.widgets .push { margin-top: auto; }
.widgets .push ~ button { height: 45px; }
.widgets .apps svg { width: 34px; height: 34px; }
.widgets i { width: 33px; height: 1px; background: #4a4a4a; margin: 6px 0; }
.widgets .badge { top: 4px; left: 14px; width: 27px; height: 15px; line-height: 15px; font-weight: 700; font-size: 11px; }
.stage { display: flex; flex-direction: column; gap: 1px; min-height: 0; }
.charts { flex: 1; min-height: 0; display: grid; grid-template-columns: 623px minmax(0, 1fr); gap: 2px; }
.left-charts { display: grid; grid-template-rows: 669fr 646fr; gap: 4px; min-height: 0; }
.pane { display: grid; background: #000; border-radius: 4px; overflow: hidden; min-height: 0; grid-template-columns: minmax(0, 1fr) 66px; grid-template-rows: minmax(0, 1fr) 25px; }
.seconds { grid-template-rows: minmax(0, 1fr) 28px; }
.five { border: 2px solid #8c8c8c; grid-template-columns: minmax(0, 1fr) 56px; grid-template-rows: minmax(0, 1fr) 27px; }
.plot { position: relative; overflow: hidden; }
.canvas { position: absolute; inset: 0; width: 100%; height: 100%; }
.canvas text { stroke: none; font: 10px Roboto, sans-serif; }
.legend { position: relative; display: flex; align-items: center; height: 18px; margin: 8px 0 0 9px; }
.seconds .legend { margin-top: 9px; }
.five .legend { margin: 6px 0 0 7px; }
.legend h2 { margin: 0 4px; font: 400 16px/18px Roboto, "Noto Sans CJK JP", sans-serif; }
.legend span { font-size: 13px; margin-left: 8px; }
.legend em { font-style: normal; font-size: 13px; color: #f23645; margin-left: 1px; }
.status { width: 18px; height: 18px; border-radius: 50%; background: #40bfa5; border: 5px solid #05221d; }
.legend-row { position: relative; display: flex; align-items: center; gap: 16px; margin: 7px 0 0 9px; }
.five .legend-row { margin-left: 7px; }
.legend-row button { display: flex; align-items: center; gap: 2px; padding-left: 1px; width: 32px; height: 21px; border: 1px solid #4a4a4a; border-radius: 3px; background: #000; line-height: 19px; }
.legend-row button svg { width: 16px; height: 16px; }
.sync { width: 18px; height: 18px; }
.gap-table { position: absolute; right: 10px; top: 8px; display: flex; gap: 1px; font: 700 10px/19px Roboto, sans-serif; color: #fff; }
.gap-table > * { background: #1b1b1d; padding: 0 4px; }
.gap-table b { background: #2e6b31; }
.price-axis { position: relative; border-left: 1px solid #6d6d6d; overflow-x: visible; overflow-y: clip; z-index: 1; font-size: 12px; font-weight: 500; line-height: 17px; }
.price-axis > * { position: absolute; left: 0; height: 17px; padding: 0 5px 0 8px; white-space: nowrap; }
.five .price-axis > * { padding-right: 4px; }
.price-axis .tag { border-radius: 0 2px 2px 0; min-width: 49px; }
.price-axis .name { left: auto; right: 100%; padding: 0 5px; border-radius: 2px 0 0 2px; font-weight: 400; }
.price-axis .add { left: -22px; padding-left: 30px; height: 21px; line-height: 21px; }
.add svg { position: absolute; left: -1px; top: -2px; width: 24px; height: 24px; }
.time-axis { position: relative; border-top: 1px solid #6d6d6d; overflow: hidden; font-size: 12px; font-weight: 500; line-height: 26px; }
.time-axis span { position: absolute; top: 0; transform: translateX(-50%); white-space: pre; }
.time-axis .cursor { background: #363a45; color: #fff; line-height: 24px; padding: 0 8px; }
.corner { border-top: 1px solid #6d6d6d; border-left: 1px solid #6d6d6d; display: grid; place-items: center; }
.corner svg { width: 18px; height: 18px; }

/* Bottom bar */
.bottom { display: flex; align-items: center; height: 38px; background: #0f0f0f; border-radius: 4px; flex: none; }
.ranges { display: grid; grid-template-columns: 33px 34px 47px 47px 47px 54px 33px 33px 54px; padding-left: 8px; }
.bottom .tb { width: 46px; }
.favorites { display: flex; align-items: center; height: 38px; margin-left: 8px; background: #1f1f1f; border-radius: 6px; }
.favorites button { width: 38px; display: flex; justify-content: center; }
.favorites .mask { fill: #1f1f1f; }
.grip { width: 8px; height: 13px; margin: 0 8px 0 7px; background: radial-gradient(circle, #5a5a5a 1px, transparent 1px) 0 0 / 4px 4px; }
.clock { margin: 0 7px 0 auto; }
.adjust { margin-left: 6px; }
.bottom .adjust + .tb { margin-left: 2px; }
```
FILE: charts.js
```javascript
const NS = 'http://www.w3.org/2000/svg';
const UP = '#089981';
const DOWN = '#f23645';

// Every series is recorded in its own units: pixel = origin + value / unit.
const scale = (x0, kx, y0, ky) => ({
  x: v => Math.round(x0 + v / kx),
  y: v => Math.round(y0 + v / ky),
  kx
});

function pen(id) {
  const svg = document.querySelector('#' + id + ' .canvas');
  const add = (tag, attrs, text) => {
    const el = document.createElementNS(NS, tag);
    for (const k in attrs) el.setAttribute(k, attrs[k]);
    if (!('stroke' in attrs)) el.setAttribute('stroke', 'none');
    if (text) el.textContent = text;
    svg.append(el);
    return el;
  };
  const rect = (s, x1, y1, x2, y2, fill, extra) => add('rect', {
    x: s.x(x1), y: s.y(y1), width: Math.max(1, s.x(x2) - s.x(x1)), height: Math.max(1, s.y(y2) - s.y(y1)),
    fill, 'shape-rendering': 'crispEdges', ...extra
  });
  const hline = (s, y, x1, x2, stroke, w = 1, dash = '') => add('line', {
    x1: x1 === null ? 0 : s.x(x1), x2: x2 === null ? '100%' : s.x(x2), y1: s.y(y) + (w % 2) / 2, y2: s.y(y) + (w % 2) / 2,
    stroke, 'stroke-width': w, 'stroke-dasharray': dash
  });
  const vline = (s, x, stroke, dash) => add('line', {
    x1: s.x(x) + 0.5, x2: s.x(x) + 0.5, y1: 0, y2: '100%', stroke, 'stroke-dasharray': dash
  });
  const curve = (s, pts, stroke, dash = '', w = 1) => add('polyline', {
    points: pts.map(p => s.x(p[0]) + ',' + s.y(p[1])).join(' '), stroke, 'stroke-width': w, 'stroke-dasharray': dash
  });
  const area = (s, pts, fill) => add('polygon', { points: pts.map(p => s.x(p[0]) + ',' + s.y(p[1])).join(' '), fill });
  const grid = (from, step, count) => {
    for (let i = 0; i < count; i++) {
      const y = Math.round(from + i * step) + 0.5;
      add('line', { x1: 0, x2: '100%', y1: y, y2: y, stroke: '#fff', 'stroke-opacity': 0.06 });
    }
  };
  // rows: [x, width, body top, body bottom, high, low, side]
  const candles = (s, rows) => rows.forEach(([x, w, t, b, hi, lo, side]) => {
    const fill = side === 'g' ? UP : DOWN;
    const cx = s.x(x);
    const bw = Math.max(1, Math.round(w / s.kx));
    const at = { fill, 'shape-rendering': 'crispEdges' };
    add('rect', { x: cx, y: s.y(hi), width: 1, height: Math.max(1, s.y(lo) - s.y(hi)), ...at });
    add('rect', { x: cx - Math.floor(bw / 2), y: s.y(t), width: bw, height: Math.max(1, s.y(b) - s.y(t)), ...at });
  });
  const dots = (s, y, xs, fill, r = 2.8) => xs.forEach(x => add('circle', { cx: s.x(x) + 0.5, cy: s.y(y) + 0.5, r, fill }));
  const pluses = (s, pts) => pts.forEach(([x, y]) => add('path', {
    d: `M${s.x(x) - 1} ${s.y(y) + 0.5}h3M${s.x(x) + 0.5} ${s.y(y) - 1}v3`, stroke: '#3d5afe'
  }));
  const bolt = (x, y) => {
    add('circle', { cx: x, cy: y, r: 10, fill: '#000', stroke: '#ab47bc', 'stroke-width': 1.5 });
    add('path', { d: `M${x + 1} ${y - 6}l-5 7h4l-1 5 5-7h-4z`, fill: '#ab47bc' });
    add('circle', { cx: x + 7, cy: y - 7, r: 3, fill: DOWN });
  };
  return { add, rect, hline, vline, curve, area, grid, candles, dots, pluses, bolt };
}

function axis(id, { prices, tags, times }) {
  const pa = document.querySelector('#' + id + ' .price-axis');
  const ta = document.querySelector('#' + id + ' .time-axis');
  const label = (parent, text, style, cls) => {
    const el = document.createElement('span');
    el.textContent = text;
    if (cls) el.className = cls;
    Object.assign(el.style, style);
    parent.append(el);
    return el;
  };
  const { from, step, y, dy, count } = prices;
  for (let i = 0; i < count; i++) {
    label(pa, (from - i * step).toLocaleString('en-US'), { top: Math.round(y + i * dy) - 9 + 'px' });
  }
  // tags: [top, text, background, colour, name, height]
  tags.forEach(([top, text, background, color, name, h]) => {
    if (name) label(pa, name, { top: top + 'px', background, color }, 'name');
    if (text) label(pa, text, { top: top + 'px', background, color, height: (h || 17) + 'px' }, 'tag');
  });
  times.forEach(([x, text, cls]) => label(ta, text, { left: x + 'px' }, cls));
  return { pa, label };
}

const YELLOW = '#ffeb3b', GREY = '#787b86', GREEN = '#4caf50', PINK = '#e91e63', SLATE = '#363a45';

/* Daily */
{
  const s = scale(-56, 2.2725, 0, 2.306);
  const p = pen('daily');
  const upper = [[127,1068],[146,1045],[160,995],[190,920],[229,775],[305,580],[358,475],[390,380],[430,275],[476,245],[514,230],[542,250],[567,252],[594,265],[619,310]];
  const mid = [[127,712],[146,709],[174,695],[201,682],[229,660],[281,644],[305,639],[333,627],[358,616],[390,585],[430,554],[476,525],[514,526],[542,522],[567,505],[594,480],[619,470]];
  const inner = [[127,1260],[146,1250],[174,1200],[229,1070],[253,1015],[305,940],[358,850],[390,780],[430,690],[476,640],[514,610],[542,600],[567,570],[594,555],[619,555]];
  const foot = [[619,1486],[127,1486]];
  p.area(s, [...upper, [619,470], [594,480], [542,522], [514,526], [430,554], [358,616], [281,644]], '#020a07');
  p.area(s, [...mid, ...foot], '#010911');
  p.area(s, [[127,1068],[146,1045],[160,995],[190,920],[229,775],[281,644],[358,616],[430,554],[514,526],[594,480],[619,470],...foot], '#010c13');
  p.area(s, [...inner, ...foot], '#02141a');
  p.area(s, [[470,1440],[514,1383],[542,1300],[567,1190],[619,1050],[619,1486],[440,1486]], '#021015');
  p.area(s, [[580,1486],[594,1420],[619,1290],[619,1486]], '#020808');
  p.curve(s, upper, '#0b2a1c', '1 3');
  p.curve(s, inner, '#062631', '1 3');
  p.grid(42, 58.93, 12);
  p.curve(s, [[127,1456],[146,1449],[174,1430],[201,1403],[229,1378],[280,1325],[305,1290],[333,1258],[358,1222],[390,1172],[430,1104],[476,1040],[514,1000],[542,953],[567,900],[594,847],[619,797]], '#a35a16');
  p.curve(s, [[127,1404],[146,1399],[174,1388],[201,1375],[229,1358],[280,1331],[333,1303],[358,1290],[390,1273],[430,1254],[476,1237],[514,1223],[542,1210],[567,1195],[594,1181],[619,1167]], '#0c7562');
  [[146,709],[174,695],[201,682],[229,660],[281,644],[305,639],[333,627],[358,616],[430,554],[514,526],[542,522],[594,480]].forEach(([x, y]) => p.dots(s, y, [x], '#2f6b3b', 2));
  p.candles(s, [[127,10,1141,1188,1141,1188,'r'],[146,21,1199,1234,1151,1244,'g'],[174,20,911,1063,895,1068,'g'],[201,20,775,835,694,851,'r'],[229,21,692,767,666,816,'g'],[253,21,653,796,634,796,'r'],[280,21,791,899,768,899,'r'],[305,21,853,888,791,895,'r'],[333,21,789,879,726,904,'g'],[358,21,708,791,629,828,'r'],[390,26,581,736,581,783,'g'],[430,34,300,438,178,588,'g'],[476,34,489,540,408,596,'r'],[514,21,657,742,544,749,'r'],[542,20,641,802,618,802,'r'],[567,20,491,544,468,544,'r'],[594,20,519,533,496,597,'g'],[619,20,447,634,424,634,'r']]);
  p.hline(s, 606, null, null, '#a92735', 2);
  p.hline(s, 629, null, null, '#a92735', 2);
  p.hline(s, 656, null, null, '#8b8f9a', 1, '5 5');
  p.hline(s, 782, 225, null, '#b8f0f5', 3, '2 4');
  p.hline(s, 1220, null, null, '#b8f0f5', 2, '2 4');
  p.hline(s, 843, null, null, '#a52c36', 1, '1 2');
  p.hline(s, 866, null, null, '#a52c36', 1, '1 2');
  p.hline(s, 1237, null, null, '#a52c36', 1, '1 2');
  p.hline(s, 1244, null, null, '#5e35b1', 3, '3 6');
  p.hline(s, 578, 389, 477, '#b9cdf0', 2);
  p.hline(s, 760, 201, 229, '#b9cdf0', 1);
  p.vline(s, 619, '#8b8f9a', '5 5');
  p.add('path', { d: 'M182 372l11 12h-6v10h-10v-10h-6z', fill: DOWN });
  p.add('path', { d: 'M124 625l9-4 9 4v15h-18z', fill: '#03201c', stroke: '#0a8a76' });
  p.add('text', { x: 133, y: 636, fill: '#0a9a84', 'text-anchor': 'middle' }, 'E');
  p.bolt(216, 631);
  p.add('text', { x: '99%', y: 387, fill: '#2196f3', 'text-anchor': 'end' }, 'VWAP S2-3');
  const { pa, label } = axis('daily', {
    prices: { from: 33000, step: 1000, y: 41, dy: 58.93, count: 11 },
    tags: [[266, '29,065', YELLOW, '#111', '6857', 45]],
    times: [[8,'13'],[55,'17'],[101,'23'],[175,'5'],[216,'5月 11 (月)','cursor'],[283,'18'],[337,'22'],[419,'6月'],[474,'5'],[527,'11']]
  });
  pa.lastChild.style.width = '60px';
  label(pa, '01:28:15', { top: '293px', color: '#4d4a20' });
  label(pa, '28,900', { top: '274px', background: SLATE, color: '#fff', height: '21px', lineHeight: '21px' }, 'tag');
}

/* 15 seconds */
{
  const s = scale(-56, 2.2725, -13, 2.24);
  const p = pen('seconds');
  p.rect(s, 127, 29, 1500, 980, '#2f1014');
  p.rect(s, 948, 29, 1500, 628, 'rgba(76,175,80,.15)');
  p.rect(s, 1104, 29, 1500, 872, 'rgba(76,175,80,.18)');
  p.rect(s, 948, 628, 1500, 1090, 'rgba(233,30,99,.18)');
  p.rect(s, 1104, 872, 1500, 1117, 'rgba(233,30,99,.2)');
  p.grid(49, 48.47, 12);
  p.candles(s, [[127,4,35,60,35,60,'g'],[149,30,31,223,31,249,'r'],[171,3,195,223,195,223,'g'],[178,3,195,223,195,223,'g'],[186,8,223,250,223,250,'r'],[192,3,223,250,223,250,'g'],[199,10,249,250,223,276,'g'],[206,7,223,250,223,250,'g'],[219,7,168,223,168,223,'g'],[235,15,168,278,168,278,'r'],[249,3,250,277,250,277,'g'],[256,7,222,250,222,250,'g'],[263,6,222,277,222,277,'r'],[270,5,277,305,250,305,'r'],[287,21,302,385,302,385,'r'],[303,7,356,385,356,412,'g'],[309,2,356,385,356,385,'r'],[313,12,385,414,385,414,'r'],[326,11,384,467,384,467,'r'],[337,7,439,467,439,467,'g'],[346,6,467,493,467,520,'r'],[358,12,493,521,466,521,'g'],[376,15,493,548,493,600,'r'],[396,15,573,685,547,685,'r'],[416,11,657,658,573,658,'g'],[431,10,657,658,520,658,'g'],[439,7,628,657,628,657,'r'],[451,11,656,711,656,711,'r'],[462,7,711,739,684,739,'r'],[480,25,710,847,710,847,'r'],[501,6,792,873,792,898,'g'],[510,6,738,765,684,765,'g'],[521,6,738,765,710,818,'r'],[530,7,711,765,684,765,'g'],[538,9,684,710,684,710,'g'],[549,9,657,711,600,711,'g'],[557,7,657,684,657,711,'r'],[564,6,684,739,684,739,'r'],[574,7,684,710,684,790,'g'],[585,8,684,710,684,739,'g'],[594,6,656,684,656,710,'g'],[606,12,711,739,684,763,'r'],[617,7,684,711,684,736,'g'],[624,8,657,684,628,684,'g'],[634,12,657,658,657,658,'g'],[642,12,600,657,600,684,'g'],[655,12,600,603,600,603,'g'],[664,7,600,628,573,628,'r'],[673,7,628,711,600,711,'r'],[687,22,684,711,684,711,'r'],[694,3,656,684,656,684,'g'],[702,3,656,684,656,684,'g'],[711,5,684,711,656,711,'r'],[719,7,710,765,710,765,'r'],[735,14,764,766,738,792,'g'],[748,11,765,847,765,847,'r'],[762,3,792,820,792,845,'g'],[769,18,818,820,792,820,'g'],[776,3,792,820,792,845,'g'],[783,6,792,847,792,847,'r'],[789,7,845,899,845,899,'r'],[799,6,792,873,764,873,'g'],[808,7,792,820,792,820,'r'],[816,3,792,820,792,820,'g'],[828,8,820,847,820,847,'g'],[835,7,845,899,845,899,'r'],[845,12,898,899,898,899,'g'],[852,3,872,899,845,899,'g'],[860,3,872,922,872,922,'g'],[867,3,872,898,872,898,'g'],[878,10,927,928,898,1007,'g'],[894,11,818,928,818,928,'g'],[903,3,792,845,792,845,'g'],[912,14,818,820,792,820,'g'],[917,3,792,820,792,820,'g'],[926,6,818,847,818,847,'g'],[934,12,818,847,818,847,'r'],[948,6,818,820,764,820,'g'],[957,7,845,899,845,899,'r'],[967,6,899,955,899,981,'r'],[978,7,955,982,925,982,'g'],[985,3,898,955,898,955,'g'],[992,3,898,925,898,925,'g'],[999,5,898,925,898,955,'r'],[1010,10,954,956,925,956,'g'],[1020,3,925,955,925,955,'g'],[1026,6,955,983,925,983,'r']]);
  p.rect(s, 127, 750, 1500, 925, 'rgba(255,152,0,.22)');
  p.hline(s, 628, 945, null, '#787b86');
  p.hline(s, 872, 1104, null, '#787b86', 2);
  p.hline(s, 750, null, null, '#ff9800', 2);
  p.hline(s, 925, null, null, '#ff9100', 2);
  p.curve(s, [[127,877],[350,925],[500,957],[650,982],[780,1007],[950,1033],[1100,1056],[1250,1077],[1394,1093]], '#3a7436', '4 2', 2);
  p.hline(s, 1387, 127, 1025, '#5a5070');
  p.vline(s, 783, '#8b8f9a', '5 5');
  p.add('path', { d: 'M12 588h13v17h-6v-11h-7zM37 588h6l-7 17h-6z', fill: '#dbdbdb' });
  p.add('circle', { cx: 30, cy: 591, r: 3, fill: '#dbdbdb' });
  const { pa, label } = axis('seconds', {
    prices: { from: 29240, step: 20, y: 1, dy: 48.47, count: 13 },
    tags: [[259,'29,130',GREY,'#fff'],[368,'29,085',GREY,'#fff'],[465,'29,045',PINK,'#fff'],[477,'29,040',PINK,'#fff'],[598,'28,990','#b39ddb','#111','MN :mn_op']],
    times: [[32,'13:40'],[133,'13:45'],[216,'13:50'],[362,'14:00'],[430,'14:05'],[501,'14:10'],[288,'5月 11 (月)    13:55:00','cursor']]
  });
  label(pa, '00:02', { top: '417px', background: YELLOW, color: '#4d4a20' });
}

/* 5 minutes */
{
  const a = scale(-3, 1.96, 398, 2.613);
  const b = scale(757, 2.178, 118, 2.8);
  const c = scale(757, 2.178, 658, 3);
  const v1 = scale(-3, 1.912, 918, 3);
  const v2 = scale(757, 1.912, 1138, 3);
  const p = pen('five');

  p.rect(a, 0, -131, 275, 127, '#0c0203');
  p.rect(a, 0, 127, 275, 740, '#24070b');
  p.rect(a, 275, 172, 1545, 1387, '#02050d');
  p.rect(a, 275, 469, 1545, 604, '#061024');
  p.rect(b, 62, 98, 1492, 390, '#0d0203');
  p.rect(c, 62, -1203, 1492, 1260, '#24070b');
  p.rect(c, 62, 1260, 1492, 1269, '#120306');
  p.grid(18, 30.555, 43);
  p.vline(a, 234, '#1a1240', '1 3');
  p.vline(a, 1513, '#1a1240', '1 3');

  const bars = (s, base, rows) => rows.forEach(([x1, x2, top, k]) => p.rect(s, x1, top, x2, base, k === 'b' ? '#0d2057' : '#25303d'));
  bars(v1, 1116, [[6,15,1068,'b'],[17,31,1080,'s'],[33,46,1080,'b'],[48,61,1062,'b'],[63,75,1065,'b'],[77,90,1062,'s'],[92,107,1023,'s'],[109,122,1062,'b'],[124,138,1053,'s'],[140,157,1014,'b'],[159,228,411,'s'],[229,306,144,'s'],[308,342,924,'s'],[344,369,987,'b'],[371,398,981,'s'],[400,417,1017,'b'],[419,446,969,'b'],[447,476,963,'b'],[478,509,963,'b'],[511,523,1035,'b'],[524,543,1008,'s'],[545,558,1047,'s'],[560,574,1044,'b'],[576,595,1011,'b'],[597,610,1062,'b'],[612,625,1068,'b'],[627,639,1080,'s'],[641,654,1041,'s'],[656,669,1068,'s'],[671,685,1074,'b'],[686,700,1062,'s'],[702,714,1086,'s'],[716,728,1077,'s'],[730,744,1071,'b'],[746,759,1041,'s'],[761,774,1032,'s'],[776,789,1059,'b'],[790,803,1077,'s'],[805,818,1029,'s'],[820,834,1044,'b'],[836,849,1056,'s'],[851,862,1104,'b'],[864,895,951,'b'],[897,910,1053,'s'],[912,927,1023,'s'],[929,945,1059,'b'],[947,958,1053,'b'],[960,973,1062,'b'],[975,989,1077,'s'],[991,1004,1083,'b'],[1006,1019,1092,'s'],[1021,1034,1062,'b'],[1036,1049,1080,'s'],[1050,1063,1083,'b'],[1065,1078,1080,'b'],[1080,1094,1083,'s'],[1096,1109,1077,'s'],[1111,1122,1089,'b'],[1124,1138,1062,'b'],[1140,1153,1056,'s'],[1155,1168,1071,'b'],[1170,1184,1083,'s'],[1186,1197,1089,'s'],[1199,1212,1068,'b'],[1214,1228,1089,'s'],[1230,1243,1083,'b'],[1245,1258,1050,'b'],[1260,1273,1077,'b'],[1274,1287,1083,'b'],[1289,1302,1089,'s'],[1304,1318,1044,'b'],[1319,1333,1077,'s'],[1335,1347,1062,'b'],[1349,1361,1050,'b'],[1363,1377,1038,'b'],[1379,1392,1074,'b'],[1394,1408,1050,'s'],[1409,1474,444,'b'],[1476,1537,597,'s']]);
  bars(v2, 456, [[86,126,219,'b'],[128,155,312,'s'],[157,176,357,'s'],[178,199,339,'s'],[201,228,312,'s'],[229,243,378,'s'],[245,264,354,'s'],[266,277,378,'s'],[279,302,330,'s'],[304,323,360,'b'],[325,354,291,'s'],[356,396,231,'b'],[398,417,354,'b'],[419,440,348,'b'],[442,463,339,'s'],[465,478,390,'b'],[480,491,384,'s'],[493,509,363,'s'],[511,524,390,'s'],[526,539,399,'b'],[541,555,402,'b'],[556,570,417,'s'],[572,583,417,'b'],[585,599,411,'s'],[600,614,420,'s'],[616,629,426,'b'],[631,644,405,'s'],[646,660,414,'b'],[662,673,420,'b'],[675,688,444,'s'],[690,713,336,'s'],[715,728,405,'b'],[730,742,402,'b'],[744,757,387,'s'],[759,773,402,'b'],[774,788,423,'s'],[790,803,414,'s'],[805,816,426,'s'],[818,832,429,'b'],[834,847,402,'s'],[849,862,429,'s'],[864,878,414,'b'],[880,891,429,'b'],[893,906,387,'s'],[908,922,387,'s'],[924,937,402,'s'],[939,952,417,'s'],[954,966,420,'s'],[968,981,445,'s']]);
  p.curve(v1, [[8,1055],[70,1057],[85,1065],[150,1058],[200,995],[268,926],[320,917],[380,901],[415,893],[460,879],[535,868],[553,870],[585,994],[600,1005],[650,1026],[680,1046],[720,1060],[770,1063],[860,1060],[880,1052],[930,1044],[1000,1050],[1060,1058],[1090,1072],[1120,1077],[1345,1076],[1400,1066],[1440,1014],[1508,972],[1566,957]], '#5a5220', '1 2');
  p.curve(v2, [[60,312],[120,295],[180,280],[210,270],[270,264],[300,255],[315,255],[340,298],[380,322],[420,334],[460,334],[480,343],[520,346],[565,360],[590,384],[640,401],[680,412],[760,406],[870,406],[885,412],[955,412]], '#5a5220', '1 2');

  // position boxes
  p.rect(c, 1108, 127, 1310, 1144, 'rgba(76,175,80,.17)');
  p.rect(c, 1128, 676, 1450, 1225, 'rgba(76,175,80,.17)');
  p.rect(c, 1108, 1144, 1310, 1301, 'rgba(233,30,99,.2)');
  p.rect(c, 1128, 1225, 1450, 1310, 'rgba(233,30,99,.2)');

  // levels
  p.hline(c, 930, null, null, '#9c1f2b', 2);
  p.hline(c, 1242, 1349, null, '#9c1f2b', 2);
  p.hline(a, 741, 171, 228, '#0a6b5c');
  p.hline(a, 739, 198, 1479, '#00acc1', 2);
  p.hline(a, 467, 1479, 1545, '#00acc1', 2);
  p.hline(a, 603, 275, 1547, '#b5854a', 2);
  p.hline(b, 389, 62, 1490, '#c07a2a', 2);
  p.hline(a, 286, 6, 228, '#8c7f45', 1, '5 4');
  p.hline(a, 461, 233, 1513, '#a89a50', 1, '5 4');
  p.hline(a, 1085, 902, 1282, '#8a2530');
  p.hline(a, 1245, 875, 1098, '#a89a20');

  const early = [9,24,40,56,72,85,103,118,134,152,199,275,334,365,395,418,444,473,506,530,548,567,581,601,618,634,650,663,679,695,710,726,740,756,771,787,803,816,832,848,863,879,902,928,944,961,977,991,1006,1022,1038,1053,1069,1083,1098,1114,1130,1146,1159,1175,1191,1206,1222,1236,1251,1267,1283,1299,1312,1328,1344,1359,1375,1389,1404,1420,1436,1479];
  const late = [123,162,190,214,245,269,290,310,332,358,386,430,465,489,515,536,554,571,589,606,623,641,658,674,691,708,726,743,761,776,800,822,839,855,872,889,907,924,940,957,974,992,1009,1025,1042,1059,1077,1094,1109];
  p.dots(a, 127, early, '#a8a4a4');
  p.dots(b, 391, late, '#c9a78e');
  p.dots(b, 645, late, '#26919a');
  p.dots(c, 814, [62, ...late.filter(x => x < 924)], '#a92430');
  p.dots(c, 814, late.filter(x => x >= 924), '#b30c10');

  p.candles(a, [[9,11,191,192,157,222,'g'],[24,9,172,240,172,240,'r'],[40,11,238,239,222,269,'g'],[56,11,238,239,191,269,'g'],[72,8,238,256,222,287,'g'],[85,10,238,272,191,272,'r'],[103,14,269,384,238,397,'r'],[118,9,308,384,293,397,'g'],[134,10,316,408,293,421,'r'],[152,14,382,400,366,478,'g'],[275,61,604,920,580,1315,'r'],[334,30,925,975,525,1004,'r'],[365,21,747,975,685,1058,'g'],[395,22,763,1022,693,1069,'r'],[418,13,836,1037,836,1051,'g'],[444,22,732,847,612,860,'g'],[473,25,374,727,335,797,'g'],[506,25,342,376,253,429,'g'],[530,10,293,345,222,358,'g'],[548,18,285,345,206,389,'r'],[567,9,358,497,335,502,'r'],[581,10,366,504,366,557,'g'],[601,14,308,368,172,374,'g'],[618,10,253,319,222,389,'g'],[634,10,238,272,206,301,'g'],[650,10,253,272,238,301,'r'],[663,9,269,361,238,421,'r'],[679,10,358,423,316,478,'r'],[695,10,389,423,366,452,'g'],[710,9,389,463,389,557,'r'],[726,9,468,481,429,517,'r'],[740,10,478,536,444,536,'r'],[756,10,494,536,429,572,'g'],[771,9,494,688,460,716,'r'],[787,10,677,909,661,949,'r'],[803,10,875,920,805,972,'g'],[816,9,860,936,844,964,'r'],[832,10,941,1231,941,1231,'r'],[848,10,1171,1231,1171,1275,'g'],[863,10,1179,1262,1171,1356,'r'],[879,11,1244,1246,1244,1246,'g'],[902,25,1077,1087,844,1108,'g'],[928,10,1069,1166,941,1166,'r'],[944,14,1163,1359,1155,1388,'r'],[961,10,1299,1348,1252,1380,'g'],[977,10,1236,1301,1194,1346,'g'],[991,10,1213,1246,1132,1252,'g'],[1006,9,1220,1247,1202,1307,'r'],[1022,9,1220,1239,1202,1291,'g'],[1038,10,1213,1254,1213,1267,'r'],[1053,9,1244,1254,1213,1356,'g'],[1069,9,1244,1301,1244,1307,'r'],[1083,9,1275,1294,1260,1356,'g'],[1098,10,1252,1286,1213,1286,'g'],[1114,9,1260,1294,1260,1330,'r'],[1130,10,1291,1309,1291,1364,'r'],[1146,9,1252,1309,1252,1346,'g'],[1159,10,1132,1270,1124,1299,'g'],[1175,10,1132,1166,1058,1179,'r'],[1191,10,1043,1158,1035,1158,'g'],[1206,10,1043,1053,1043,1108,'r'],[1222,10,1058,1119,1051,1132,'r'],[1236,10,956,1111,941,1116,'g'],[1251,9,964,998,956,1027,'r'],[1267,10,980,998,972,1069,'g'],[1283,10,844,990,805,990,'g'],[1299,10,821,847,781,847,'g'],[1312,10,813,831,789,852,'g'],[1328,9,813,831,805,852,'r'],[1344,10,661,831,653,831,'g'],[1359,10,653,719,638,732,'r'],[1375,10,677,727,645,797,'g'],[1389,9,564,679,525,685,'g'],[1404,10,517,575,436,588,'g'],[1420,11,460,520,460,541,'g'],[1436,10,460,625,460,645,'r']]);
  p.candles(b, [[62,54,390,1008,98,1008,'r'],[123,37,952,972,794,1226,'g'],[162,24,952,1058,935,1184,'r'],[190,15,1022,1117,969,1168,'r'],[214,19,1106,1187,1056,1277,'r'],[245,24,1201,1366,1114,1518,'r'],[269,10,1364,1470,1305,1501,'r']]);
  p.hline(c, 640, 800, 1228, '#8a2530');
  p.hline(c, 721, 776, 1008, '#a89a20');
  p.candles(c, [[290,15,-57,90,-66,153,'r'],[310,11,87,201,69,234,'r'],[332,20,189,348,126,447,'r'],[358,15,345,357,252,399,'g'],[386,29,336,660,336,711,'r'],[430,37,546,651,447,951,'g'],[465,16,447,549,408,591,'g'],[489,20,381,438,225,591,'g'],[515,20,372,834,372,876,'r'],[536,11,675,834,582,840,'g'],[554,11,675,687,582,702,'r'],[571,15,693,732,684,939,'r'],[589,11,738,807,684,885,'r'],[606,11,630,798,591,804,'g'],[623,11,519,624,492,657,'g'],[641,11,519,669,510,693,'r'],[658,11,639,669,591,693,'g'],[674,10,648,678,600,738,'r'],[691,11,666,732,639,777,'r'],[708,11,639,732,612,738,'g'],[726,11,621,789,582,804,'r'],[743,11,786,798,786,876,'g'],[761,11,711,780,711,840,'g'],[776,11,720,741,720,741,'r'],[800,19,639,972,600,978,'r'],[822,11,831,972,822,996,'g'],[839,11,582,825,573,825,'g'],[855,11,573,678,510,711,'r'],[872,11,612,678,546,720,'g'],[889,11,630,678,582,702,'r'],[907,10,675,816,666,849,'r'],[924,11,813,861,804,861,'r'],[940,11,858,859,840,885,'g'],[957,11,858,954,849,996,'r'],[974,11,930,942,912,978,'r'],[992,10,840,942,813,942,'g'],[1009,11,822,834,795,840,'g'],[1025,11,831,1017,822,1017,'r'],[1042,11,1014,1155,987,1161,'r'],[1059,11,1152,1182,1104,1233,'r'],[1077,11,1170,1209,1125,1215,'r'],[1094,11,1197,1209,1185,1250,'r'],[1109,11,1206,1263,1188,1263,'r']]);
  p.hline(c, 652, 26, 1115, '#b3a45c', 1, '5 4');

  p.pluses(a, [[9,353],[24,351],[40,351],[56,351],[72,351],[85,349],[152,351],[199,391],[275,940],[334,922],[444,898],[473,866],[506,827],[530,805],[548,782],[567,771],[581,761],[601,742],[618,733],[634,725],[650,720],[663,709],[679,704],[695,699],[710,696],[726,693],[740,691],[756,689],[771,689],[803,693],[816,696],[832,709],[848,720],[863,728],[879,730],[902,744],[928,748],[944,762],[961,770],[977,777],[991,783],[1006,788],[1022,790],[1038,793],[1053,801],[1069,804],[1083,806],[1098,811],[1114,814],[1130,816],[1146,819],[1159,824],[1175,829],[1191,832],[1206,832],[1222,835],[1236,835],[1251,837],[1267,837],[1283,837],[1312,837],[1328,837],[1344,835],[1359,835],[1375,835],[1389,829],[1404,827],[1420,824],[1436,819],[1479,777]]);
  p.pluses(b, [[123,794],[162,835],[190,858],[214,891],[245,939],[269,967],[290,1009],[310,1043],[332,1099],[358,1138],[386,1216],[430,1311],[465,1342],[489,1367],[515,1404],[536,1423],[554,1443],[571,1468],[589,1488],[606,1499],[623,1507],[641,1516],[658,1521],[674,1530],[691,1538],[708,1541],[726,1552],[743,1561],[761,1566],[776,1569]]);
  p.pluses(c, [[800,88],[822,100],[839,109],[855,118],[872,127],[889,130],[907,136],[924,142],[940,148],[957,157],[974,163],[992,169],[1009,175],[1025,187],[1042,202],[1059,214],[1077,223],[1094,232],[1109,235]]);

  p.add('rect', { x: -4, y: c.y(1182), width: c.x(1349) + 4, height: 20, fill: 'rgba(255,152,0,.2)', stroke: '#ff9800', 'stroke-width': 2 });
  p.hline(a, 468, null, null, '#fbc02d', 3, '3 6');
  p.hline(c, 1144, 1108, 1309, '#787b86');
  p.hline(c, 1225, 1126, 1450, '#787b86');
  p.curve(c, [[760,927],[800,995],[860,1075],[920,1143],[980,1200],[1040,1244],[1108,1282],[1170,1305],[1240,1319],[1300,1322],[1370,1315],[1430,1300],[1465,1288]], '#3a7436', '4 2', 2);
  p.vline(c, 1094, '#8b9aa8', '6 5');
  p.add('line', { x1: 0, x2: '100%', y1: 1180.5, y2: 1180.5, stroke: '#8b9aa8', 'stroke-dasharray': '5 6' });
  const note = (s, x, y, text, fill) => p.add('text', { x: s.x(x), y: s.y(y) + 4, fill, 'text-anchor': 'middle' }, text);
  note(a, 1477, 728, '1530', '#0fa3b8');
  note(a, 1545, 457, '1530', '#0fa3b8');
  note(a, 1282, 1071, '1230', '#8a2530');
  note(c, 1227, 623, '1230', '#a03a38');
  note(a, 1545, 595, 'op', '#b5804a');
  note(b, 1489, 377, 'op', '#b5802a');
  p.bolt(1266, 1276);

  const { pa, label } = axis('five', {
    prices: { from: 30800, step: 50, y: 18, dy: 30.555, count: 42 },
    tags: [
      [249,'30,410','#fff','#111','week :w_op'], [340,'30,260','#00ffff','#111','week :HH'],
      [527,'29,955',GREEN,'#fff'], [569,'29,885','#fbc02d','#111'], [692,'29,685',GREEN,'#fff'],
      [728,'29,625','#2962ff','#fff','VWAP'], [854,'29,420',GREY,'#fff'], [875,'29,385',GREEN,'#fff'],
      [921,'29,310','#ff0000','#fff','week :LL'], [951,'29,260',PINK,'#fff'], [1031,'29,130',GREY,'#fff'],
      [1070,'29,065',YELLOW,'#111','6857',45], [1058,'29,085',GREY,'#fff'],
      [1283,'25.41 K','#90bff9','#111','Volume'], [1268,'59.59 K',YELLOW,'#111','Volume MA']
    ],
    times: [[41,'15:00'],[137,'8'],[238,'09:30'],[303,'10:00'],[351,'10:30'],[398,'11:00'],[458,'12:30'],[510,'13:00'],[557,'13:30'],[604,'14:00'],[651,'14:30'],[698,'15:00'],[785,'11'],[880,'09:30'],[954,'10:00'],[1019,'10:30'],[1067,'11:00'],[1124,'12:30'],[1173,'13:00'],[1321,'14:30'],[1377,'15:00'],[1441,'12'],[1496,'09:30'],[1551,'10:00'],[1606,'10:30'],[1662,'11:00'],[1717,'11:30'],[1774,'12:30'],[1260,'5月 11 (月)    13:55','cursor']]
  });
  label(pa, '02:16', { top: '1098px', color: '#4d4a20' });
  label(pa, '29,040', { top: '1083px', height: '20px', lineHeight: '20px', background: PINK, color: '#fff' }, 'tag');
  const cursor = label(pa, '28,900', { top: '1170px', background: SLATE, color: '#fff' }, 'tag add');
  cursor.insertAdjacentHTML('beforeend', '<svg><use href="#i-pluscircle"/></svg>');
}
```
